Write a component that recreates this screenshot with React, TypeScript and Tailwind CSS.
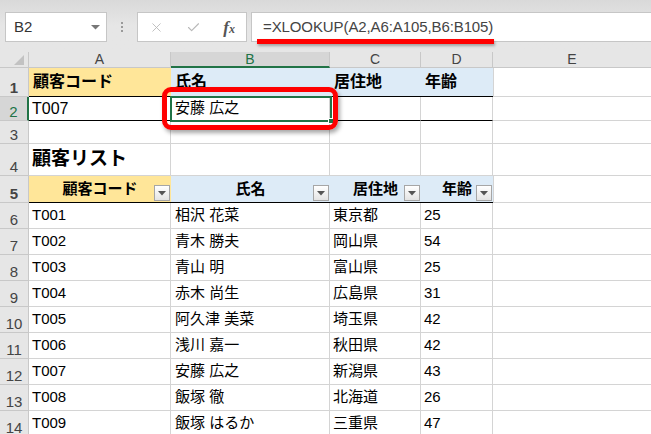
import { X, Check } from "lucide-react";

const W = { a: "w-[142px]", b: "w-[159px]", c: "w-[91px]", d: "w-[72px]" };

const rows = [
  ["T001", "相沢 花菜", "東京都", "25"],
  ["T002", "青木 勝夫", "岡山県", "54"],
  ["T003", "青山 明", "富山県", "25"],
  ["T004", "赤木 尚生", "広島県", "31"],
  ["T005", "阿久津 美菜", "埼玉県", "42"],
  ["T006", "浅川 嘉一", "秋田県", "42"],
  ["T007", "安藤 広之", "新潟県", "43"],
  ["T008", "飯塚 徹", "北海道", "26"],
  ["T009", "飯塚 はるか", "三重県", "47"],
];

function RowHead({ n, sel }: { n: number; sel?: boolean }) {
  return (
    <div
      className={`w-[29px] shrink-0 h-full flex items-end justify-center pb-[1px] text-[15px] leading-none border-b border-b-[#c8c8c8] ${
        sel
          ? "bg-[#d6d6d6] text-[#217346] border-r-2 border-r-[#217346]"
          : "bg-[#e6e6e6] text-[#444] border-r border-r-[#c8c8c8]"
      }`}
    >
      {n}
    </div>
  );
}

function FilterBtn() {
  return (
    <div className="absolute right-[1px] bottom-[1px] w-[16px] h-[16px] border border-[#a6a6a6] bg-gradient-to-b from-white to-[#e4e4e4] flex items-center justify-center">
      <svg width="8" height="5" viewBox="0 0 8 5">
        <polygon points="0,0 8,0 4,4.5" fill="#555" />
      </svg>
    </div>
  );
}

function Cell({ w, children }: { w: string; children?: React.ReactNode }) {
  return (
    <div className={`${w} shrink-0 h-full flex items-center pl-[3px] border-r border-b border-[#d4d4d4] whitespace-nowrap overflow-hidden`}>
      {children}
    </div>
  );
}

export default function App() {
  return (
    <div className="relative w-[651px] h-[434px] overflow-hidden bg-white text-black font-['Liberation_Sans','Noto_Sans_CJK_JP',sans-serif]">
      {/* 数式バー */}
      <div className="h-[52px] bg-[#e6e6e6] bg-gradient-to-b from-[#d9d9d9] via-[#e6e6e6] to-[#e6e6e6] flex items-start pt-[12px] pl-[5px]">
        <div className="w-[102px] h-[30px] bg-white border border-[#c6c6c6] flex items-center pl-[8px] pr-[6px] justify-between">
          <span className="text-[15px] text-[#333]">B2</span>
          <svg width="9" height="5" viewBox="0 0 9 5">
            <polygon points="0,0 9,0 4.5,4.5" fill="#777" />
          </svg>
        </div>
        <div className="w-[30px] h-[30px] flex flex-col items-center justify-center gap-[2px]">
          <div className="w-[2px] h-[2px] bg-[#9a9a9a]" />
          <div className="w-[2px] h-[2px] bg-[#9a9a9a]" />
          <div className="w-[2px] h-[2px] bg-[#9a9a9a]" />
        </div>
        <div className="w-[110px] h-[30px] bg-white border border-[#c6c6c6] flex items-center pl-[11px] pr-[11px] justify-between">
          <X size={15} strokeWidth={1.4} color="#b8b8b8" />
          <Check size={15} strokeWidth={1.8} color="#b8b8b8" />
          <span className="font-['Liberation_Serif',serif] italic font-bold text-[17px] text-[#555] leading-none">
            f<span className="text-[12px]">x</span>
          </span>
        </div>
        <div className="ml-[4px] flex-1 h-[30px] bg-white border border-[#c6c6c6] border-r-0 flex items-center pl-[11px]">
          <span className="text-[15px] text-[#444] tracking-[-0.1px]">=XLOOKUP(A2,A6:A105,B6:B105)</span>
        </div>
      </div>

      {/* 列見出し */}
      <div className="flex h-[16px] text-[14px] leading-none text-[#444]">
        <div className="w-[29px] shrink-0 bg-[#e6e6e6] border-r border-b border-[#c8c8c8] relative">
          <svg className="absolute right-[4px] bottom-[2px]" width="10" height="10" viewBox="0 0 10 10">
            <polygon points="10,0 10,10 0,10" fill="#c2c2c2" />
          </svg>
        </div>
        <div className={`${W.a} shrink-0 bg-[#e6e6e6] border-r border-b border-[#c8c8c8] flex items-end justify-center pb-[1px]`}>A</div>
        <div className={`${W.b} shrink-0 bg-[#d6d6d6] border-r border-r-[#c8c8c8] border-b-2 border-b-[#217346] text-[#217346] flex items-end justify-center`}>B</div>
        <div className={`${W.c} shrink-0 bg-[#e6e6e6] border-r border-b border-[#c8c8c8] flex items-end justify-center pb-[1px]`}>C</div>
        <div className={`${W.d} shrink-0 bg-[#e6e6e6] border-r border-b border-[#c8c8c8] flex items-end justify-center pb-[1px]`}>D</div>
        <div className="flex-1 bg-[#e6e6e6] border-b border-[#c8c8c8] flex items-end justify-center pb-[1px]">E</div>
      </div>

      {/* 1行目 */}
      <div className="flex h-[29px] text-[16px] font-bold">
        <RowHead n={1} />
        <div className={`${W.a} shrink-0 h-full bg-[#ffe699] border-b border-black flex items-center pl-[4px]`}>顧客コード</div>
        <div className={`${W.b} shrink-0 h-full bg-[#ddebf7] border-b border-black flex items-center pl-[4px]`}>氏名</div>
        <div className={`${W.c} shrink-0 h-full bg-[#ddebf7] border-b border-black flex items-center pl-[4px]`}>居住地</div>
        <div className={`${W.d} shrink-0 h-full bg-[#ddebf7] border-b border-black flex items-center pl-[4px]`}>年齢</div>
        <div className="flex-1 h-full border-l border-b border-[#d4d4d4]" />
      </div>

      {/* 2行目 */}
      <div className="flex h-[24px] text-[16px]">
        <RowHead n={2} sel />
        <div className={`${W.a} shrink-0 h-full border-r border-r-[#d4d4d4] border-b border-b-black flex items-center pl-[3px]`}>T007</div>
        <div className={`${W.b} shrink-0 h-full border-r border-r-[#d4d4d4] border-b border-b-black flex items-center pl-[4px] text-[15px]`}>安藤 広之</div>
        <div className={`${W.c} shrink-0 h-full border-r border-r-[#d4d4d4] border-b border-b-black`} />
        <div className={`${W.d} shrink-0 h-full border-r border-r-[#d4d4d4] border-b border-b-black`} />
        <div className="flex-1 h-full border-b border-[#d4d4d4]" />
      </div>

      {/* 3行目 */}
      <div className="flex h-[23px]">
        <RowHead n={3} />
        <Cell w={W.a} />
        <Cell w={W.b} />
        <Cell w={W.c} />
        <Cell w={W.d} />
        <div className="flex-1 h-full border-b border-[#d4d4d4]" />
      </div>

      {/* 4行目 */}
      <div className="flex h-[32px]">
        <RowHead n={4} />
        <Cell w={W.a}>
          <span className="text-[19px] font-bold">顧客リスト</span>
        </Cell>
        <Cell w={W.b} />
        <Cell w={W.c} />
        <Cell w={W.d} />
        <div className="flex-1 h-full border-b border-[#d4d4d4]" />
      </div>

      {/* 5行目 テーブル見出し */}
      <div className="flex h-[27px] text-[15px] font-bold">
        <RowHead n={5} />
        <div className={`${W.a} shrink-0 h-full relative bg-[#ffe699] border-b border-black flex items-center justify-center`}>
          顧客コード
          <FilterBtn />
        </div>
        <div className={`${W.b} shrink-0 h-full relative bg-[#ddebf7] border-b border-black flex items-center justify-center`}>
          氏名
          <FilterBtn />
        </div>
        <div className={`${W.c} shrink-0 h-full relative bg-[#ddebf7] border-b border-black flex items-center justify-center`}>
          居住地
          <FilterBtn />
        </div>
        <div className={`${W.d} shrink-0 h-full relative bg-[#ddebf7] border-b border-black flex items-center justify-center`}>
          年齢
          <FilterBtn />
        </div>
        <div className="flex-1 h-full border-l border-b border-[#d4d4d4]" />
      </div>

      {/* データ行 */}
      {rows.map((r, i) => (
        <div key={r[0]} className="flex h-[26px] text-[15px]">
          <RowHead n={i + 6} />
          <Cell w={W.a}>{r[0]}</Cell>
          <Cell w={W.b}>
            <span className="pl-[1px]">{r[1]}</span>
          </Cell>
          <Cell w={W.c}>{r[2]}</Cell>
          <Cell w={W.d}>{r[3]}</Cell>
          <div className="flex-1 h-full border-b border-[#d4d4d4]" />
        </div>
      ))}

      {/* 選択セル B2 */}
      <div className="absolute left-[170px] top-[96px] w-[162px] h-[26px] border-2 border-[#217346]">
        <div className="absolute right-[-4px] bottom-[-4px] w-[6px] h-[6px] bg-[#217346] border border-white" />
      </div>

      {/* 赤い囲み */}
      <div className="absolute left-[162px] top-[87px] w-[176px] h-[43px] border-[5px] border-[#ff0000] rounded-[9px] shadow-[2px_3px_4px_rgba(0,0,0,0.35)]" />

      {/* 数式の下線 */}
      <div className="absolute left-[257px] top-[39px] w-[237px] h-[5px] bg-[#ff0000] shadow-[1px_2px_3px_rgba(0,0,0,0.3)]" />
    </div>
  );
}
